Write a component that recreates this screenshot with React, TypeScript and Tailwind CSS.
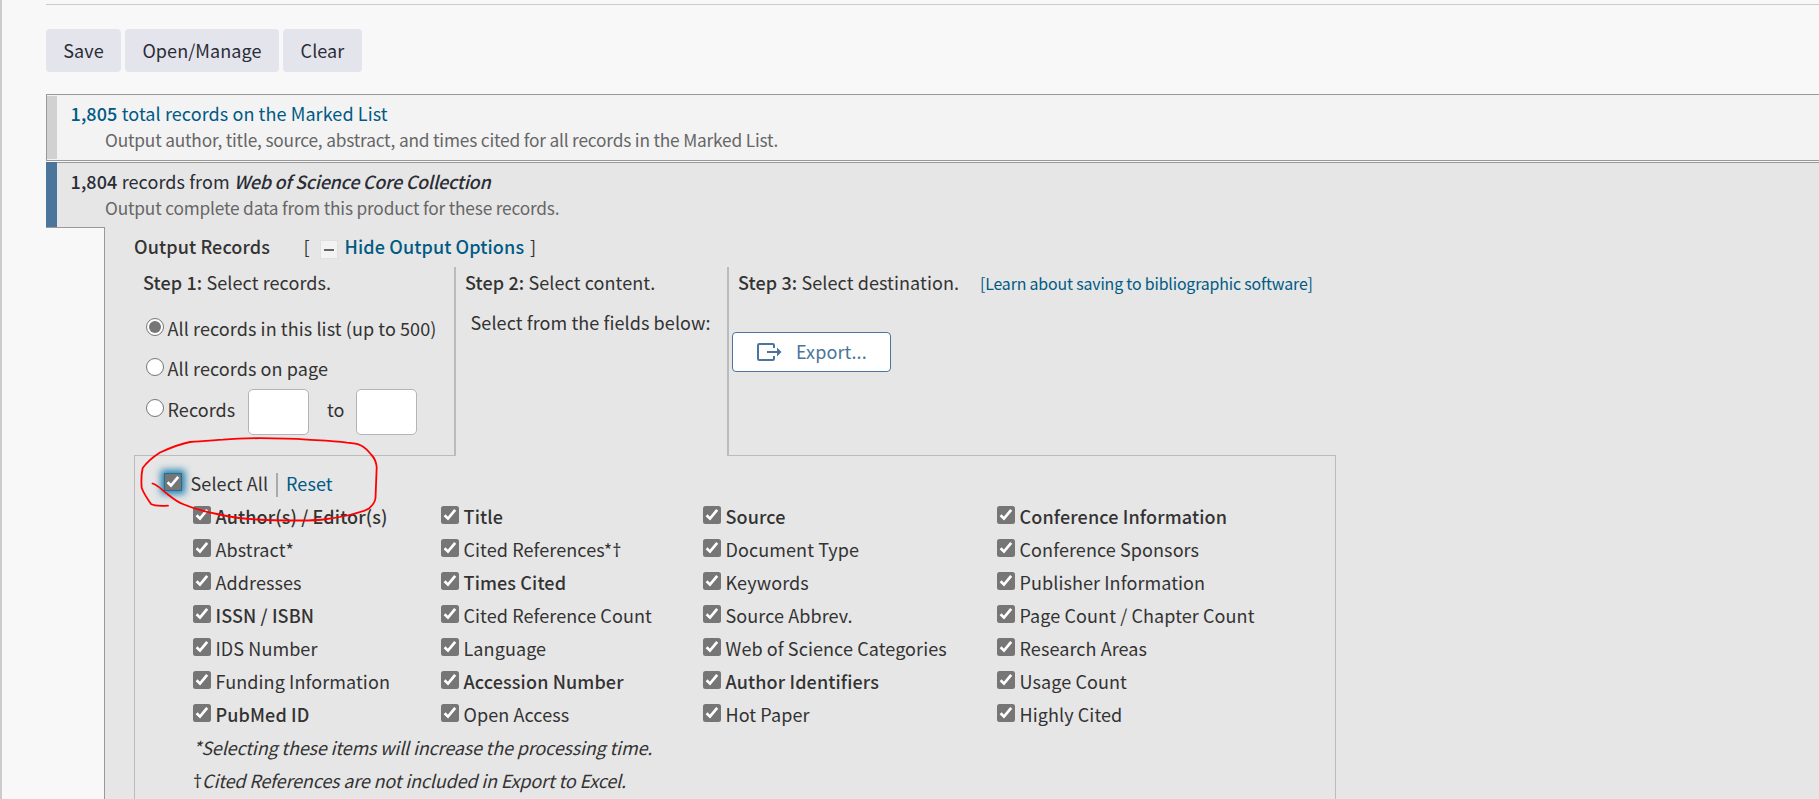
import React from "react";

type Field = { label: string; bold?: boolean; dagger?: boolean };

const columns: { width: string; fields: Field[] }[] = [
  {
    width: "w-[248px]",
    fields: [
      { label: "Author(s) / Editor(s)", bold: true },
      { label: "Abstract*" },
      { label: "Addresses" },
      { label: "ISSN / ISBN", bold: true },
      { label: "IDS Number" },
      { label: "Funding Information" },
      { label: "PubMed ID", bold: true },
    ],
  },
  {
    width: "w-[262px]",
    fields: [
      { label: "Title", bold: true },
      { label: "Cited References*", dagger: true },
      { label: "Times Cited", bold: true },
      { label: "Cited Reference Count" },
      { label: "Language" },
      { label: "Accession Number", bold: true },
      { label: "Open Access" },
    ],
  },
  {
    width: "w-[294px]",
    fields: [
      { label: "Source", bold: true },
      { label: "Document Type" },
      { label: "Keywords" },
      { label: "Source Abbrev." },
      { label: "Web of Science Categories" },
      { label: "Author Identifiers", bold: true },
      { label: "Hot Paper" },
    ],
  },
  {
    width: "w-[300px]",
    fields: [
      { label: "Conference Information", bold: true },
      { label: "Conference Sponsors" },
      { label: "Publisher Information" },
      { label: "Page Count / Chapter Count" },
      { label: "Research Areas" },
      { label: "Usage Count" },
      { label: "Highly Cited" },
    ],
  },
];

function B({ children }: { children: React.ReactNode }) {
  return <span className="font-medium tracking-[0.12px]">{children}</span>;
}

function Dagger() {
  return <span className="font-['Noto_Sans',sans-serif] not-italic leading-none">†</span>;
}

function Check({ focused }: { focused?: boolean }) {
  return (
    <svg
      viewBox="0 0 18 18"
      className={
        focused
          ? "size-[18px] shrink-0 bg-[#767676] outline outline-1 -outline-offset-1 outline-[#1f6f99] shadow-[0_0_7px_3px_#1f7fae]"
          : "size-[18px] shrink-0 rounded-[2.5px] bg-[#767676]"
      }
    >
      <path d="M3.6 9.2 L7 12.6 L14.2 3.9" fill="none" stroke="#fff" strokeWidth="2.7" />
    </svg>
  );
}

function Radio({ checked }: { checked?: boolean }) {
  return (
    <span className="flex size-[18px] shrink-0 items-center justify-center rounded-full border border-[#767676] bg-white">
      {checked && <span className="size-[12px] rounded-full bg-[#767676]" />}
    </span>
  );
}

function RadioRow({ label, checked }: { label: string; checked?: boolean }) {
  return (
    <div className="flex h-[26px] items-start">
      <div className="pt-[3px]">
        <Radio checked={checked} />
      </div>
      <span className="pl-[3.5px] leading-[26px]">{label}</span>
    </div>
  );
}

function ExportIcon() {
  return (
    <svg viewBox="0 0 26 20" className="h-5 w-[26px]" fill="none" stroke="#4b759b" strokeWidth="2">
      <path d="M18 6 V3.2 Q18 2 16.8 2 H3.2 Q2 2 2 3.2 V16.8 Q2 18 3.2 18 H16.8 Q18 18 18 16.8 V14" />
      <path d="M11 10 H22" />
      <path d="M21 5.5 L25.5 10 L21 14.5 Z" fill="#4b759b" stroke="none" />
    </svg>
  );
}

export default function App() {
  return (
    <div className="relative h-[799px] w-full overflow-hidden whitespace-nowrap border-l-2 border-[#ccc] bg-[#f8f8f8] pl-11 font-['Noto_Sans_CJK_SC',sans-serif] text-[18px] leading-[26px] tracking-[0.09px] text-[#333]">
      <div className="mt-1 h-px bg-[#ccc]" />

      <div className="mt-6 flex gap-1 text-[#2a2d35]">
        <button className="h-[43px] w-[75px] rounded bg-[#e4e4ed] pb-[2px]">Save</button>
        <button className="h-[43px] w-[154px] rounded bg-[#e4e4ed] pb-[2px]">Open/Manage</button>
        <button className="h-[43px] w-[79px] rounded bg-[#e4e4ed] pb-[2px]">Clear</button>
      </div>

      <div className="mt-[22px] flex h-[67px] border border-r-0 border-[#999] bg-[#f3f3f3] py-px">
        <div className="w-[10px] bg-[#d1d1d1]" />
        <div className="pl-[13.5px] pt-[4px] text-[#005a84]">
          <div>
            <B>1,805</B> total records on the Marked List
          </div>
          <div className="pl-[34.5px] text-[17.3px] leading-[28px] tracking-[-0.18px] text-[#666]">
            Output author, title, source, abstract, and times cited for all records in the Marked List.
          </div>
        </div>
      </div>

      <div className="mt-px flex h-[65px] bg-[#e6e6e6]">
        <div className="w-[11px] bg-[#4b759b]" />
        <div className="flex-1 border-t border-[#999] pl-[13.5px] pt-[5px]">
          <div className="text-[#2a2d35]">
            <B>1,804</B> records from{" "}
            <i className="font-medium tracking-[-0.26px]">Web of Science Core Collection</i>
          </div>
          <div className="pl-[34.5px] text-[17.3px] leading-[28px] tracking-[-0.18px] text-[#666]">
            Output complete data from this product for these records.
          </div>
        </div>
      </div>

      <div className="flex h-[572px]">
        <div className="w-[59px] border-r border-t border-[#999]" />
        <div className="flex-1 bg-[#e6e6e6] pl-[29px] pt-[6px]">
          <div className="flex h-[34px]">
            <span className="w-[169.5px] font-medium tracking-[0.12px]">Output Records</span>
            <span className="w-[16.5px]">[</span>
            <span className="mt-[7px] flex h-[19px] w-[18px] items-center justify-center border border-[#e0e0e0] bg-[#f3f3f3]">
              <span className="h-[2px] w-[10px] bg-[#666]" />
            </span>
            <span className="w-[192px] pl-[6.5px] font-medium tracking-[0.12px] text-[#005a84]">
              Hide Output Options
            </span>
            <span>]</span>
          </div>

          <div className="flex h-[189px]">
            <div className="w-[322px] border-b border-r-2 border-[#bbb] pl-[9px] pt-[2px]">
              <div>
                <B>Step 1:</B> Select records.
              </div>
              <div className="pl-[3px] pt-[20px]">
                <RadioRow label="All records in this list (up to 500)" checked />
                <div className="h-[14px]" />
                <RadioRow label="All records on page" />
                <div className="flex pt-[8px]">
                  <div className="w-[102px] pt-[7px]">
                    <RadioRow label="Records" />
                  </div>
                  <span className="h-[46px] w-[61px] rounded-[5px] border border-[#b3b3bb] bg-white" />
                  <span className="w-[47px] pl-[18px] pt-[7px]">to</span>
                  <span className="h-[46px] w-[61px] rounded-[5px] border border-[#b3b3bb] bg-white" />
                </div>
              </div>
            </div>
            <div className="w-[273px] border-r-2 border-[#bbb] pl-[9px] pt-[2px]">
              <div>
                <B>Step 2:</B> Select content.
              </div>
              <div className="pl-[5.5px] pt-[14px]">Select from the fields below:</div>
            </div>
            <div className="w-[607px] border-b border-[#bbb] pt-[2px]">
              <div className="flex h-[26px] pl-[9px]">
                <span className="w-[242px]">
                  <B>Step 3:</B> Select destination.
                </span>
                <span className="text-[15.9px] leading-[29px] tracking-[-0.16px] text-[#005a84]">
                  [Learn about saving to bibliographic software]
                </span>
              </div>
              <div className="pl-[3px] pt-[37px]">
                <button className="flex h-10 w-[159px] items-center gap-[14px] rounded border border-[#4b759b] bg-white pl-[23px] text-[#4b759b]">
                  <ExportIcon />
                  <span className="pb-[2px]">Export...</span>
                </button>
              </div>
            </div>
          </div>

          <div className="h-[343px] w-[1202px] border-x border-[#bbb] pt-[14px]">
            <div className="flex h-[33px] pl-[29px]">
              <div className="pt-[3px]">
                <Check focused />
              </div>
              <span className="w-[94px] pl-[8.5px]">Select All</span>
              <span className="mt-[3px] h-6 w-[2px] bg-[#aaa]" />
              <span className="pl-[8px] text-[#005a84]">Reset</span>
            </div>
            <div className="flex pl-[58px]">
              {columns.map((column) => (
                <div key={column.width} className={column.width}>
                  {column.fields.map((field) => (
                    <div key={field.label} className="flex h-[33px]">
                      <div className="pt-[3px]">
                        <Check />
                      </div>
                      <span
                        className={field.bold ? "pl-[4.5px] font-medium tracking-[0.13px]" : "pl-[4.5px]"}
                      >
                        {field.label}
                        {field.dagger && <Dagger />}
                      </span>
                    </div>
                  ))}
                </div>
              ))}
            </div>
            <div className="pl-[58px] italic tracking-[-0.16px]">
              <div className="h-[33px]">*Selecting these items will increase the processing time.</div>
              <div className="h-[33px]">
                <Dagger />
                Cited References are not included in Export to Excel.
              </div>
            </div>
          </div>
        </div>
      </div>

      <svg
        viewBox="136 434 246 92"
        className="pointer-events-none absolute left-[134px] top-[434px] h-[92px] w-[246px]"
        fill="none"
        stroke="#f00"
        strokeWidth="1.8"
        strokeLinecap="round"
        strokeLinejoin="round"
      >
        <path d="M152.500 483.500 C158 485 163 491 168 494.500 C173 498.500 177 502 184 504.500 C195 509 206 512 217 514 C230 517 243 519 257 519.500 C272 520.500 287 520.500 300 520.500 C312 520.500 320 520 327 519 C337 517.500 346 516 353 514 C360 512 365 511 369 508.500 C373 505 375 502 375.500 498 L376.700 467 C376 461 374 457.500 371.500 455 C368 450.500 365 447.500 361 445.500 C357 443.500 352 443 347 442.700 C334 441 320 440.500 307 439.700 C291 438.500 275 438.200 260 438.200 C248 438.200 236 438.500 223 439.700 C211 440.500 201 441 190 442 C179 444 170 448 160 452.500 C153 457 147 462 142.700 468 C141 475 141.200 482 141.700 488 C144 494 147.500 499 151 504 C155 506.500 161 505.800 168 505.700" />
      </svg>
    </div>
  );
}
